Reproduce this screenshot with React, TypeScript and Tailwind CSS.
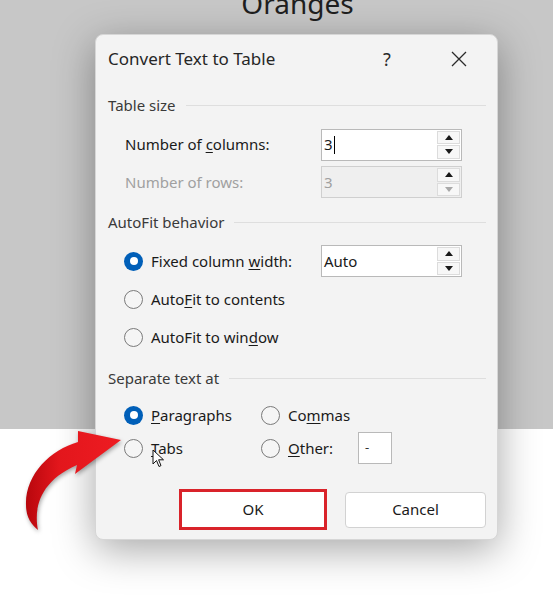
import React from "react";

const font = { fontFamily: '"Noto Sans", "Open Sans", sans-serif' };

function Spinner({ disabled = false }: { disabled?: boolean }) {
  return (
    <div className="flex flex-col w-[24px] h-full py-[1px] pr-[1px] gap-[1px]">
      <div className="flex-1 flex items-center justify-center bg-[#f7f7f7] border border-[#dcdcdc]">
        <svg width="8" height="5" viewBox="0 0 8 5">
          <path d="M0 5 L4 0 L8 5 Z" fill="#1a1a1a" />
        </svg>
      </div>
      <div className="flex-1 flex items-center justify-center bg-[#f7f7f7] border border-[#dcdcdc]">
        <svg width="8" height="5" viewBox="0 0 8 5">
          <path d="M0 0 L4 5 L8 0 Z" fill={disabled ? "#a8a8a8" : "#1a1a1a"} />
        </svg>
      </div>
    </div>
  );
}

function SpinBox({ value, disabled = false, caret = false }: { value: string; disabled?: boolean; caret?: boolean }) {
  return (
    <div
      className={`flex items-stretch w-[141px] h-[32px] border ${
        disabled ? "bg-[#efefef] border-[#cfcfcf]" : "bg-white border-[#b9b9b9]"
      }`}
    >
      <div className={`flex-1 flex items-center pl-[2px] text-[15px] ${disabled ? "text-[#a0a0a0]" : "text-[#1a1a1a]"}`}>
        {value}
        {caret && <span className="inline-block w-px h-[18px] bg-black ml-[1px]" />}
      </div>
      <Spinner disabled={disabled} />
    </div>
  );
}

function Radio({ checked = false }: { checked?: boolean }) {
  return checked ? (
    <span className="w-[19px] h-[19px] rounded-full bg-[#005fb8] flex items-center justify-center shrink-0">
      <span className="w-[8px] h-[8px] rounded-full bg-white" />
    </span>
  ) : (
    <span className="w-[19px] h-[19px] rounded-full border border-[#7a7a7a] bg-[#f5f5f5] shrink-0" />
  );
}

function Section({ title }: { title: string }) {
  return (
    <div className="flex items-center gap-[10px] pr-[11px]">
      <span className="text-[15px] text-[#3a3a3a] whitespace-nowrap">{title}</span>
      <div className="flex-1 h-px bg-[#dedede]" />
    </div>
  );
}

export default function App() {
  return (
    <div className="relative w-[553px] h-[602px] overflow-hidden bg-white" style={font}>
      {/* Word page behind the dialog */}
      <div className="h-[429px] bg-[#c7c7c7] flex justify-center">
        <p className="text-[28px] leading-none text-[#1f1f1f] -mt-[11px] pl-[42px]">Oranges</p>
      </div>

      {/* Dialog */}
      <div className="absolute left-[95px] top-[34px] w-[403px] h-[506px] rounded-[8px] bg-[#f3f3f3] border border-[#d6d6d6] shadow-[0_10px_40px_rgba(0,0,0,0.35)] flex flex-col">
        {/* Title bar */}
        <div className="h-[48px] flex items-center pl-[12px] shrink-0">
          <span className="text-[17px] text-[#262626]">Convert Text to Table</span>
          <span className="ml-auto text-[18px] text-[#2a2a2a] w-[16px] text-center mr-[56px]">?</span>
          <svg width="16" height="16" viewBox="0 0 16 16" className="mr-[30px]">
            <path d="M1 1 L15 15 M15 1 L1 15" stroke="#2a2a2a" strokeWidth="1.3" />
          </svg>
        </div>

        <div className="pl-[12px] flex flex-col">
          <div className="h-[44px] flex flex-col justify-center">
            <Section title="Table size" />
          </div>

          <div className="h-[35px] flex items-center pl-[17px]">
            <span className="w-[196px] text-[15px] text-[#1a1a1a]">
              Number of <span className="underline underline-offset-2">c</span>olumns:
            </span>
            <SpinBox value="3" caret />
          </div>
          <div className="h-[40px] flex items-center pl-[17px]">
            <span className="w-[196px] text-[15px] text-[#a0a0a0]">Number of rows:</span>
            <SpinBox value="3" disabled />
          </div>

          <div className="h-[40px] flex flex-col justify-center">
            <Section title="AutoFit behavior" />
          </div>

          <div className="h-[38px] flex items-center pl-[16px]">
            <div className="w-[197px] flex items-center gap-[8px]">
              <Radio checked />
              <span className="text-[15px] text-[#1a1a1a]">
                Fixed column <span className="underline underline-offset-2">w</span>idth:
              </span>
            </div>
            <SpinBox value="Auto" />
          </div>
          <div className="h-[38px] flex items-center pl-[16px] gap-[8px]">
            <Radio />
            <span className="text-[15px] text-[#1a1a1a]">
              Auto<span className="underline underline-offset-2">F</span>it to contents
            </span>
          </div>
          <div className="h-[38px] flex items-center pl-[16px] gap-[8px]">
            <Radio />
            <span className="text-[15px] text-[#1a1a1a]">
              AutoFit to win<span className="underline underline-offset-2">d</span>ow
            </span>
          </div>

          <div className="h-[44px] flex flex-col justify-center">
            <Section title="Separate text at" />
          </div>

          <div className="h-[30px] flex items-center pl-[16px]">
            <div className="w-[137px] flex items-center gap-[8px]">
              <Radio checked />
              <span className="text-[15px] text-[#1a1a1a]">
                <span className="underline underline-offset-2">P</span>aragraphs
              </span>
            </div>
            <div className="flex items-center gap-[8px]">
              <Radio />
              <span className="text-[15px] text-[#1a1a1a]">
                Co<span className="underline underline-offset-2">m</span>mas
              </span>
            </div>
          </div>
          <div className="h-[36px] flex items-center pl-[16px]">
            <div className="w-[137px] flex items-center gap-[8px]">
              <Radio />
              <span className="text-[15px] text-[#1a1a1a]">
                <span className="underline underline-offset-2">T</span>abs
              </span>
            </div>
            <div className="w-[97px] flex items-center gap-[8px]">
              <Radio />
              <span className="text-[15px] text-[#1a1a1a]">
                <span className="underline underline-offset-2">O</span>ther:
              </span>
            </div>
            <div className="w-[34px] h-[32px] bg-white border border-[#b9b9b9] flex items-center pl-[6px] text-[13px] text-[#333]">
              -
            </div>
          </div>
        </div>

        {/* Buttons */}
        <div className="mt-[23px] flex items-center pl-[83px] gap-[18px]">
          <div className="w-[148px] h-[41px] border-[3px] border-[#d9232a] flex">
            <div className="flex-1 bg-white flex items-center justify-center text-[15px] text-[#1a1a1a]">OK</div>
          </div>
          <div className="w-[141px] h-[36px] bg-white border border-[#d2d2d2] rounded-[4px] flex items-center justify-center text-[15px] text-[#1a1a1a]">
            Cancel
          </div>
        </div>
      </div>

      {/* Mouse pointer */}
      <svg className="absolute left-[152px] top-[449px]" width="13" height="20" viewBox="0 0 13 20">
        <path d="M1 1 L1 15 L4.5 11.5 L7 17.5 L9 16.6 L6.6 10.8 L11.5 10.8 Z" fill="white" stroke="#111" strokeWidth="1" strokeLinejoin="round" />
      </svg>

      {/* Red callout arrow */}
      <svg
        className="absolute left-[20px] top-[420px] drop-shadow-[1px_2px_2px_rgba(0,0,0,0.35)]"
        width="110"
        height="120"
        viewBox="0 0 110 120"
      >
        <defs>
          <linearGradient id="arrowRed" x1="0" y1="0" x2="1" y2="0">
            <stop offset="0" stopColor="#b8070d" />
            <stop offset="0.35" stopColor="#e3161c" />
            <stop offset="1" stopColor="#ee1c22" />
          </linearGradient>
        </defs>
        <path
          d="M101 20 L58 11 L58 22 C30 30 5 55 6 85 C6 98 12 105 18 110 C14 90 18 62 57 45 L55 54 Z"
          fill="url(#arrowRed)"
        />
      </svg>
    </div>
  );
}
